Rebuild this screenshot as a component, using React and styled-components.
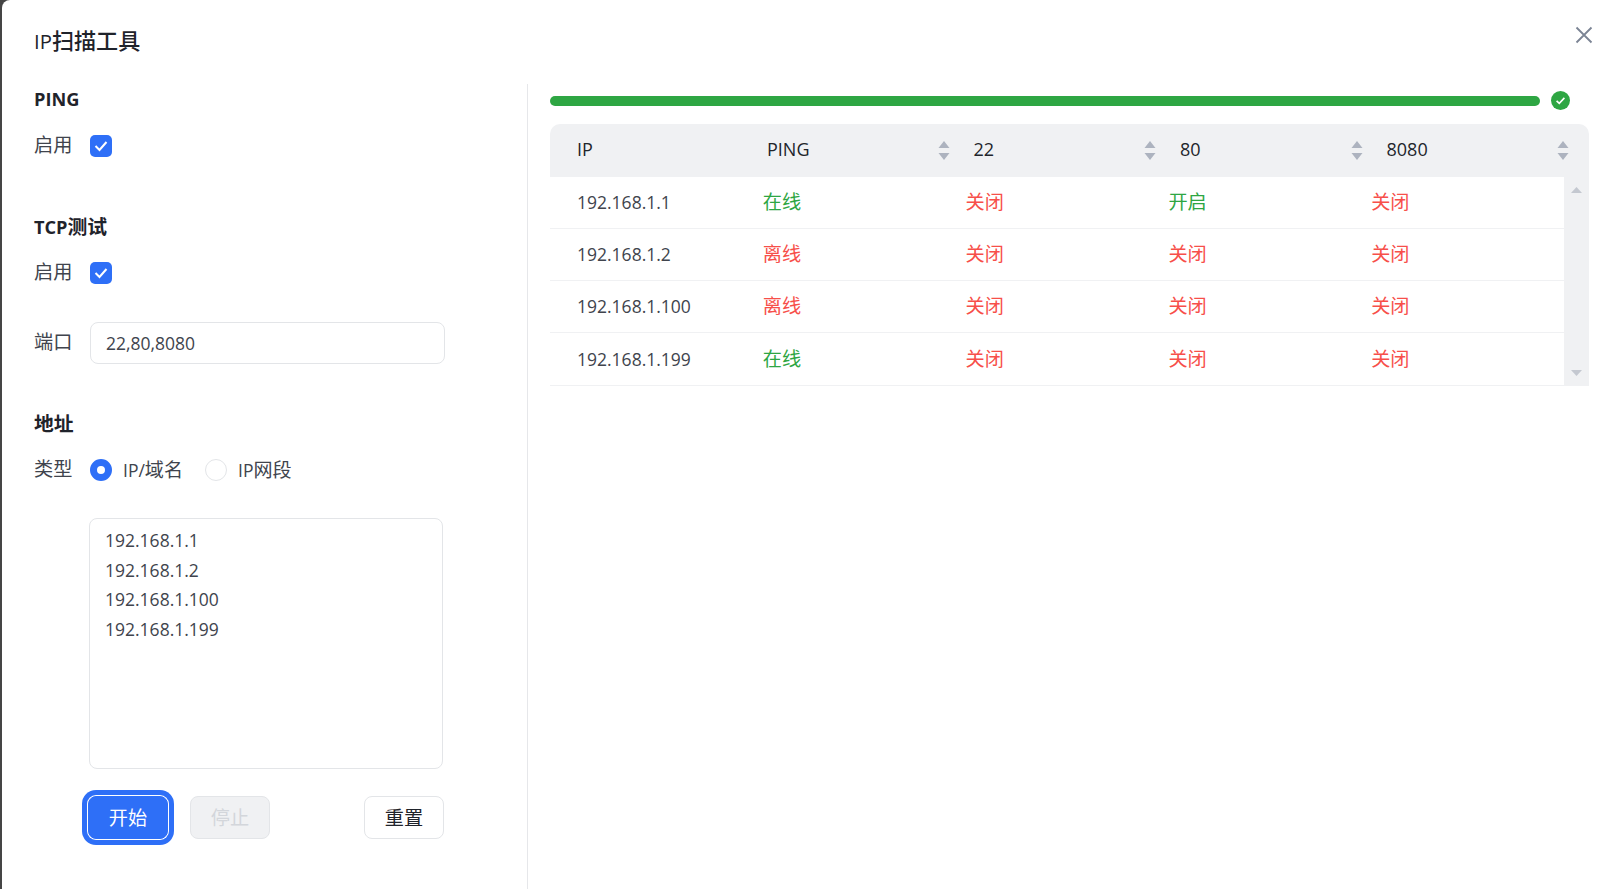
import styled, { createGlobalStyle } from "styled-components";

const ports = ["22", "80", "8080"];

const results = [
  { ip: "192.168.1.1", ping: true, ports: [false, true, false] },
  { ip: "192.168.1.2", ping: false, ports: [false, false, false] },
  { ip: "192.168.1.100", ping: false, ports: [false, false, false] },
  { ip: "192.168.1.199", ping: true, ports: [false, false, false] },
];

const App = () => {
  return (
    <Page>
      <GlobalStyle />
      <Modal>
        <Header>
          <Title>
            IP<Han>扫描工具</Han>
          </Title>
          <CloseButton aria-label="关闭">
            <svg width="18" height="18" viewBox="0 0 18 18">
              <path d="M1.5 1.5 16.5 16.5M16.5 1.5 1.5 16.5" stroke="#7b8494" strokeWidth="1.8" fill="none" />
            </svg>
          </CloseButton>
        </Header>
        <Body>
          <Form>
            <Heading>PING</Heading>
            <Row $top={10} $height={44}>
              <Label>启用</Label>
              <CheckBox />
            </Row>

            <Heading $top={44}>
              TCP<Han>测试</Han>
            </Heading>
            <Row $top={9} $height={44}>
              <Label>启用</Label>
              <CheckBox />
            </Row>
            <Row $top={27} $height={42}>
              <Label>端口</Label>
              <PortInput defaultValue="22,80,8080" />
            </Row>

            <Heading $top={45}>
              <Han>地址</Han>
            </Heading>
            <Row $top={9} $height={44}>
              <Label>类型</Label>
              <Radio $checked />
              <RadioText>
                IP/<Han>域名</Han>
              </RadioText>
              <Radio />
              <RadioText>
                IP<Han>网段</Han>
              </RadioText>
            </Row>
            <AddressBox
              readOnly
              defaultValue={"192.168.1.1\n192.168.1.2\n192.168.1.100\n192.168.1.199"}
            />
            <Actions>
              <StartButton>开始</StartButton>
              <StopButton disabled>停止</StopButton>
              <ResetButton>重置</ResetButton>
            </Actions>
          </Form>

          <Results>
            <ProgressRow>
              <ProgressBar />
              <svg width="19" height="19" viewBox="0 0 19 19">
                <circle cx="9.5" cy="9.5" r="9.5" fill="#2ea643" />
                <path d="M5.6 9.8 8.3 12.4 13.4 6.9" stroke="#fff" strokeWidth="1.6" fill="none" />
              </svg>
            </ProgressRow>

            <Table>
              <TableHead>
                <IpHeadCell>IP</IpHeadCell>
                <HeadCell>
                  <span>PING</span>
                  <SortIcon />
                </HeadCell>
                {ports.map((port) => (
                  <HeadCell key={port}>
                    <span>{port}</span>
                    <SortIcon />
                  </HeadCell>
                ))}
              </TableHead>
              <TableBody>
                <Rows>
                  {results.map((item) => (
                    <TableRow key={item.ip}>
                      <IpCell>{item.ip}</IpCell>
                      <Status $ok={item.ping}>{item.ping ? "在线" : "离线"}</Status>
                      {item.ports.map((open, i) => (
                        <Status key={i} $ok={open}>
                          {open ? "开启" : "关闭"}
                        </Status>
                      ))}
                    </TableRow>
                  ))}
                </Rows>
                <ScrollTrack>
                  <svg width="11" height="6" viewBox="0 0 11 6">
                    <path d="M5.5 0 11 6H0Z" fill="#c4c8d0" />
                  </svg>
                  <svg width="11" height="6" viewBox="0 0 11 6">
                    <path d="M0 0H11L5.5 6Z" fill="#c4c8d0" />
                  </svg>
                </ScrollTrack>
              </TableBody>
            </Table>
          </Results>
        </Body>
      </Modal>
    </Page>
  );
};

const CheckBox = () => (
  <CheckBoxWrap>
    <svg width="14" height="12" viewBox="0 0 14 12">
      <path d="M1.5 6 5.5 10 12.5 2" stroke="#fff" strokeWidth="2" fill="none" />
    </svg>
  </CheckBoxWrap>
);

const SortIcon = () => (
  <SortWrap>
    <svg width="12" height="19" viewBox="0 0 12 19">
      <path d="M6 0 11.5 7H.5Z" fill="#adb3bf" />
      <path d="M.5 12H11.5L6 19Z" fill="#adb3bf" />
    </svg>
  </SortWrap>
);

const GlobalStyle = createGlobalStyle`
  html, body {
    margin: 0;
    padding: 0;
    background: #454545;
  }
  body {
    font-family: "Open Sans", "Noto Sans CJK SC", sans-serif;
    font-size: 17.5px;
    color: #40444d;
  }
  * {
    box-sizing: border-box;
  }
`;

const Page = styled.div`
  width: 1619px;
  height: 889px;
  padding-left: 2px;
  overflow: hidden;
`;

const Modal = styled.div`
  height: 889px;
  background: #fff;
  border-radius: 8px 0 0 0;
  display: flex;
  flex-direction: column;
`;

const Header = styled.div`
  height: 84px;
  flex-shrink: 0;
  padding: 0 26px 6px 32px;
  display: flex;
  align-items: center;
  justify-content: space-between;
`;

const Han = styled.span`
  font-size: 1.09em;
`;

const Title = styled.div`
  font-size: 20.3px;
  font-weight: 500;
  color: #1f232b;
`;

const CloseButton = styled.button`
  padding: 0;
  border: 0;
  background: none;
  width: 18px;
  height: 18px;
  margin-bottom: 8px;
`;

const Body = styled.div`
  flex: 1;
  display: flex;
  min-height: 0;
`;

const Form = styled.div`
  width: 526px;
  flex-shrink: 0;
  padding-left: 32px;
  border-right: 1px solid #e6e7ea;
`;

const Heading = styled.div`
  height: 30px;
  margin-top: ${(p) => p.$top || 0}px;
  line-height: 30px;
  font-size: 18.2px;
  font-weight: 700;
  color: #1f232b;
`;

const Row = styled.div`
  display: flex;
  align-items: center;
  height: ${(p) => p.$height}px;
  margin-top: ${(p) => p.$top}px;
`;

const Label = styled.span`
  width: 56px;
  flex-shrink: 0;
  font-size: 19.2px;
  padding-bottom: 4px;
`;

const CheckBoxWrap = styled.span`
  width: 22px;
  height: 22px;
  border-radius: 5px;
  background: #2e6ff7;
  display: flex;
  align-items: center;
  justify-content: center;
`;

const PortInput = styled.input`
  width: 355px;
  height: 42px;
  padding: 0 15px;
  border: 1px solid #e3e5e8;
  border-radius: 8px;
  outline: none;
  font: inherit;
  color: #40444d;
`;

const Radio = styled.span`
  width: 22px;
  height: 22px;
  border-radius: 50%;
  flex-shrink: 0;
  background: #fff;
  border: ${(p) => (p.$checked ? "7px solid #2e6ff7" : "1px solid #e3e5e8")};
`;

const RadioText = styled.span`
  margin-left: 11px;
  margin-right: 21px;
  width: 61px;
  white-space: nowrap;
  padding-bottom: 2px;
`;

const AddressBox = styled.textarea`
  display: block;
  width: 354px;
  height: 251px;
  margin: 26px 0 0 55px;
  padding: 7px 15px;
  border: 1px solid #e3e5e8;
  border-radius: 8px;
  outline: none;
  resize: none;
  font: inherit;
  line-height: 29.6px;
  color: #40444d;
`;

const Actions = styled.div`
  display: flex;
  width: 356px;
  margin: 27px 0 0 54px;
`;

const ActionButton = styled.button`
  width: 80px;
  height: 43px;
  border-radius: 8px;
  border: 1px solid #e3e5e8;
  padding: 0 0 2px;
  font-family: inherit;
  font-size: 19.2px;
  background: #fff;
  color: #1f232b;
`;

const StartButton = styled(ActionButton)`
  border-color: #2e6ff7;
  background: #2e6ff7;
  color: #fff;
  box-shadow: 0 0 0 1px #fff, 0 0 0 6px #2e6ff7;
`;

const StopButton = styled(ActionButton)`
  margin-left: 22px;
  background: #f0f1f3;
  color: #d3d6db;
`;

const ResetButton = styled(ActionButton)`
  margin-left: auto;
`;

const Results = styled.div`
  width: 1039px;
  margin-left: 22px;
`;

const ProgressRow = styled.div`
  display: flex;
  align-items: center;
  gap: 11px;
  height: 19px;
  margin-top: 7px;
  width: 1020px;
`;

const ProgressBar = styled.div`
  flex: 1;
  height: 10px;
  border-radius: 5px;
  background: #2ea643;
`;

const Table = styled.div`
  margin-top: 14px;
`;

const TableHead = styled.div`
  display: flex;
  height: 53px;
  font-size: 18px;
  background: #f0f1f3;
  border-radius: 10px 10px 0 0;
  color: #22252b;
`;

const IpHeadCell = styled.div`
  width: 200.5px;
  padding-left: 27px;
  line-height: 51px;
`;

const HeadCell = styled.div`
  width: 206.5px;
  padding: 0 7.5px 0 16.5px;
  display: flex;
  align-items: center;
  justify-content: space-between;
  line-height: 51px;
  & > span:first-child {
    height: 53px;
  }
`;

const SortWrap = styled.span`
  display: flex;
`;

const TableBody = styled.div`
  display: flex;
  border-bottom: 1px solid #f0f1f3;
`;

const Rows = styled.div`
  flex: 1;
`;

const TableRow = styled.div`
  display: grid;
  grid-template-columns: repeat(5, 1fr);
  align-items: center;
  height: 52px;
  border-bottom: 1px solid #f0f1f3;
  &:last-child {
    border-bottom: 0;
  }
`;

const IpCell = styled.div`
  padding: 0 0 1px 27px;
`;

const Status = styled.div`
  padding: 0 0 3px 10px;
  font-size: 19.2px;
  color: ${(p) => (p.$ok ? "#2ea643" : "#f74f4a")};
`;

const ScrollTrack = styled.div`
  width: 25px;
  flex-shrink: 0;
  background: #f0f1f3;
  padding: 10px 0 9px;
  display: flex;
  flex-direction: column;
  align-items: center;
  justify-content: space-between;
`;

export default App;
